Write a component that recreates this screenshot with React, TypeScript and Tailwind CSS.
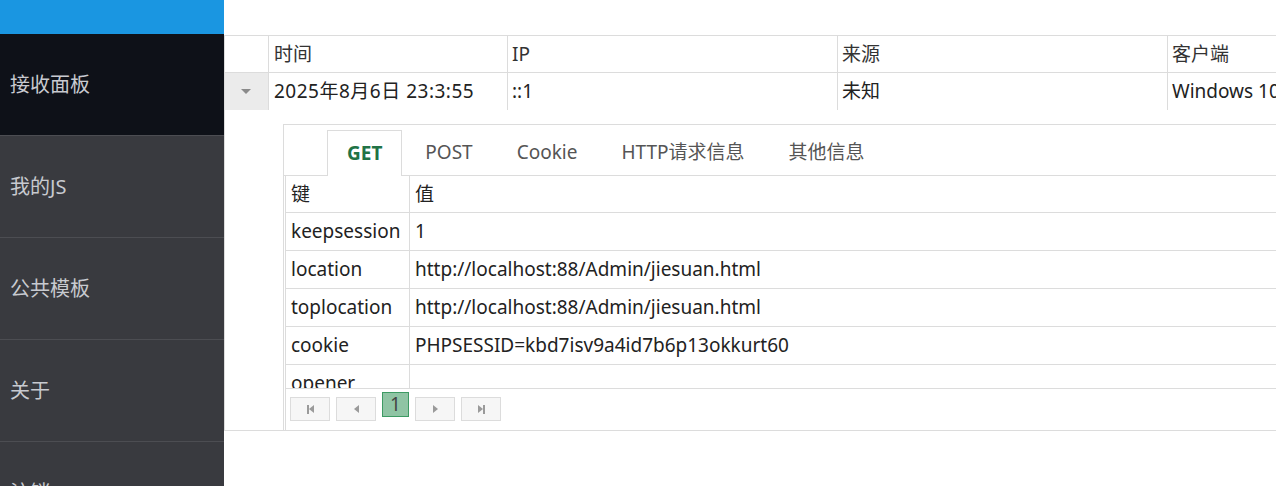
import React from "react";

const font = "font-['Noto_Sans','Noto_Sans_CJK_SC',sans-serif]";

const navItems = ["我的JS", "公共模板", "关于", "注销"];

const kv: [string, string][] = [
  ["keepsession", "1"],
  ["location", "http://localhost:88/Admin/jiesuan.html"],
  ["toplocation", "http://localhost:88/Admin/jiesuan.html"],
  ["cookie", "PHPSESSID=kbd7isv9a4id7b6p13okkurt60"],
  ["opener", ""],
];

function PagerBtn({ children }: { children: React.ReactNode }) {
  return (
    <div className="w-[40px] h-[24px] shrink-0 border border-[#dcdcdc] bg-[#f6f6f6] flex items-center justify-center">
      {children}
    </div>
  );
}

export default function App() {
  return (
    <div className={`flex h-[486px] w-[1283px] overflow-hidden bg-white ${font}`}>
      {/* Sidebar */}
      <aside className="w-[224px] shrink-0 flex flex-col bg-[#393a3f] overflow-hidden">
        <div className="h-[34px] shrink-0 bg-[#1a96e1]" />
        <div className="h-[101px] shrink-0 bg-[#0e1118] flex items-center pl-[10px] text-[20px] text-[#c8cad0]">
          接收面板
        </div>
        {navItems.map((t) => (
          <div
            key={t}
            className="h-[102px] shrink-0 border-t border-[#4c4d52] flex items-center pl-[10px] text-[20px] text-[#c8cad0]"
          >
            {t}
          </div>
        ))}
      </aside>

      {/* Main */}
      <main className="flex-1 min-w-0 pr-[7px] flex flex-col">
        <div className="h-[35px] shrink-0" />
        <div className="h-[396px] shrink-0 border-l border-t border-b border-[#dcdcdc] overflow-hidden flex flex-col">
          {/* Header row */}
          <div className="flex h-[37px] shrink-0 border-b border-[#dcdcdc] text-[19px] text-[#333]">
            <div className="w-[44px] shrink-0 border-r border-[#dcdcdc]" />
            <div className="w-[239px] shrink-0 border-r border-[#dcdcdc] pl-[5px] flex items-center">时间</div>
            <div className="w-[330px] shrink-0 border-r border-[#dcdcdc] pl-[4px] flex items-center">IP</div>
            <div className="w-[330px] shrink-0 border-r border-[#dcdcdc] pl-[4px] flex items-center">来源</div>
            <div className="w-[330px] shrink-0 pl-[4px] flex items-center whitespace-nowrap">客户端</div>
          </div>
          {/* Data row */}
          <div className="flex h-[37px] shrink-0 text-[19px] text-[#222]">
            <div className="w-[44px] shrink-0 border-r border-[#dcdcdc] bg-[#ebebeb] flex items-center justify-center">
              <div className="w-0 h-0 border-l-[5px] border-r-[5px] border-t-[5px] border-l-transparent border-r-transparent border-t-[#8a8a8a] ml-[-1px]" />
            </div>
            <div className="w-[239px] shrink-0 border-r border-[#dcdcdc] pl-[5px] flex items-center whitespace-nowrap tracking-[0.5px]">2025年8月6日 23:3:55</div>
            <div className="w-[330px] shrink-0 border-r border-[#dcdcdc] pl-[4px] flex items-center">::1</div>
            <div className="w-[330px] shrink-0 border-r border-[#dcdcdc] pl-[4px] flex items-center">未知</div>
            <div className="w-[330px] shrink-0 pl-[4px] flex items-center whitespace-nowrap">Windows 10</div>
          </div>

          {/* Detail */}
          <div className="flex-1 pl-[58px] pt-[14px] flex min-w-0">
            <div className="flex-1 border-l border-t border-[#dcdcdc] flex flex-col min-w-0">
              {/* Tabs */}
              <div className="h-[51px] shrink-0 pt-[5px] pl-[43px] flex items-end border-b border-[#dcdcdc] text-[19px] text-[#555]">
                <div className="h-[46px] px-[19px] border border-b-0 border-[#dcdcdc] bg-white flex items-center font-bold text-[#217346] mb-[-1px]">
                  GET
                </div>
                <div className="h-[45px] pl-[23px] pr-[22px] flex items-center">POST</div>
                <div className="h-[45px] px-[22px] flex items-center">Cookie</div>
                <div className="h-[45px] px-[22px] flex items-center whitespace-nowrap">HTTP请求信息</div>
                <div className="h-[45px] px-[22px] flex items-center whitespace-nowrap">其他信息</div>
              </div>
              {/* Inner table */}
              <div className="ml-[1px] border-l border-[#dcdcdc] flex-1 flex flex-col">
                <div className="h-[212px] shrink-0 overflow-hidden text-[19px] text-[#222]">
                  <div className="flex h-[37px] border-b border-[#dcdcdc]">
                    <div className="w-[124px] shrink-0 border-r border-[#dcdcdc] pl-[5px] flex items-center">键</div>
                    <div className="flex-1 pl-[5px] flex items-center">值</div>
                  </div>
                  {kv.map(([k, v]) => (
                    <div key={k} className="flex h-[38px] border-b border-[#dcdcdc]">
                      <div className="w-[124px] shrink-0 border-r border-[#dcdcdc] pl-[5px] flex items-center whitespace-nowrap">{k}</div>
                      <div className="flex-1 pl-[5px] flex items-center whitespace-nowrap">{v}</div>
                    </div>
                  ))}
                </div>
                {/* Pager */}
                <div className="flex-1 border-t border-[#dcdcdc] pl-[4px] pt-[8px] flex items-start gap-[6px]">
                  <PagerBtn>
                    <div className="flex items-center">
                      <div className="w-[2px] h-[9px] bg-[#9a9a9a]" />
                      <div className="w-0 h-0 border-t-[4px] border-b-[4px] border-r-[5px] border-t-transparent border-b-transparent border-r-[#9a9a9a]" />
                    </div>
                  </PagerBtn>
                  <PagerBtn>
                    <div className="w-0 h-0 border-t-[4px] border-b-[4px] border-r-[5px] border-t-transparent border-b-transparent border-r-[#9a9a9a]" />
                  </PagerBtn>
                  <div className="w-[27px] h-[25px] shrink-0 mt-[-5px] border border-[#3d9a63] bg-[#8fc4a4] flex items-center justify-center text-[19px] text-[#444]">
                    1
                  </div>
                  <PagerBtn>
                    <div className="w-0 h-0 border-t-[4px] border-b-[4px] border-l-[5px] border-t-transparent border-b-transparent border-l-[#9a9a9a]" />
                  </PagerBtn>
                  <PagerBtn>
                    <div className="flex items-center">
                      <div className="w-0 h-0 border-t-[4px] border-b-[4px] border-l-[5px] border-t-transparent border-b-transparent border-l-[#9a9a9a]" />
                      <div className="w-[2px] h-[9px] bg-[#9a9a9a]" />
                    </div>
                  </PagerBtn>
                </div>
              </div>
            </div>
          </div>
        </div>
      </main>
    </div>
  );
}
